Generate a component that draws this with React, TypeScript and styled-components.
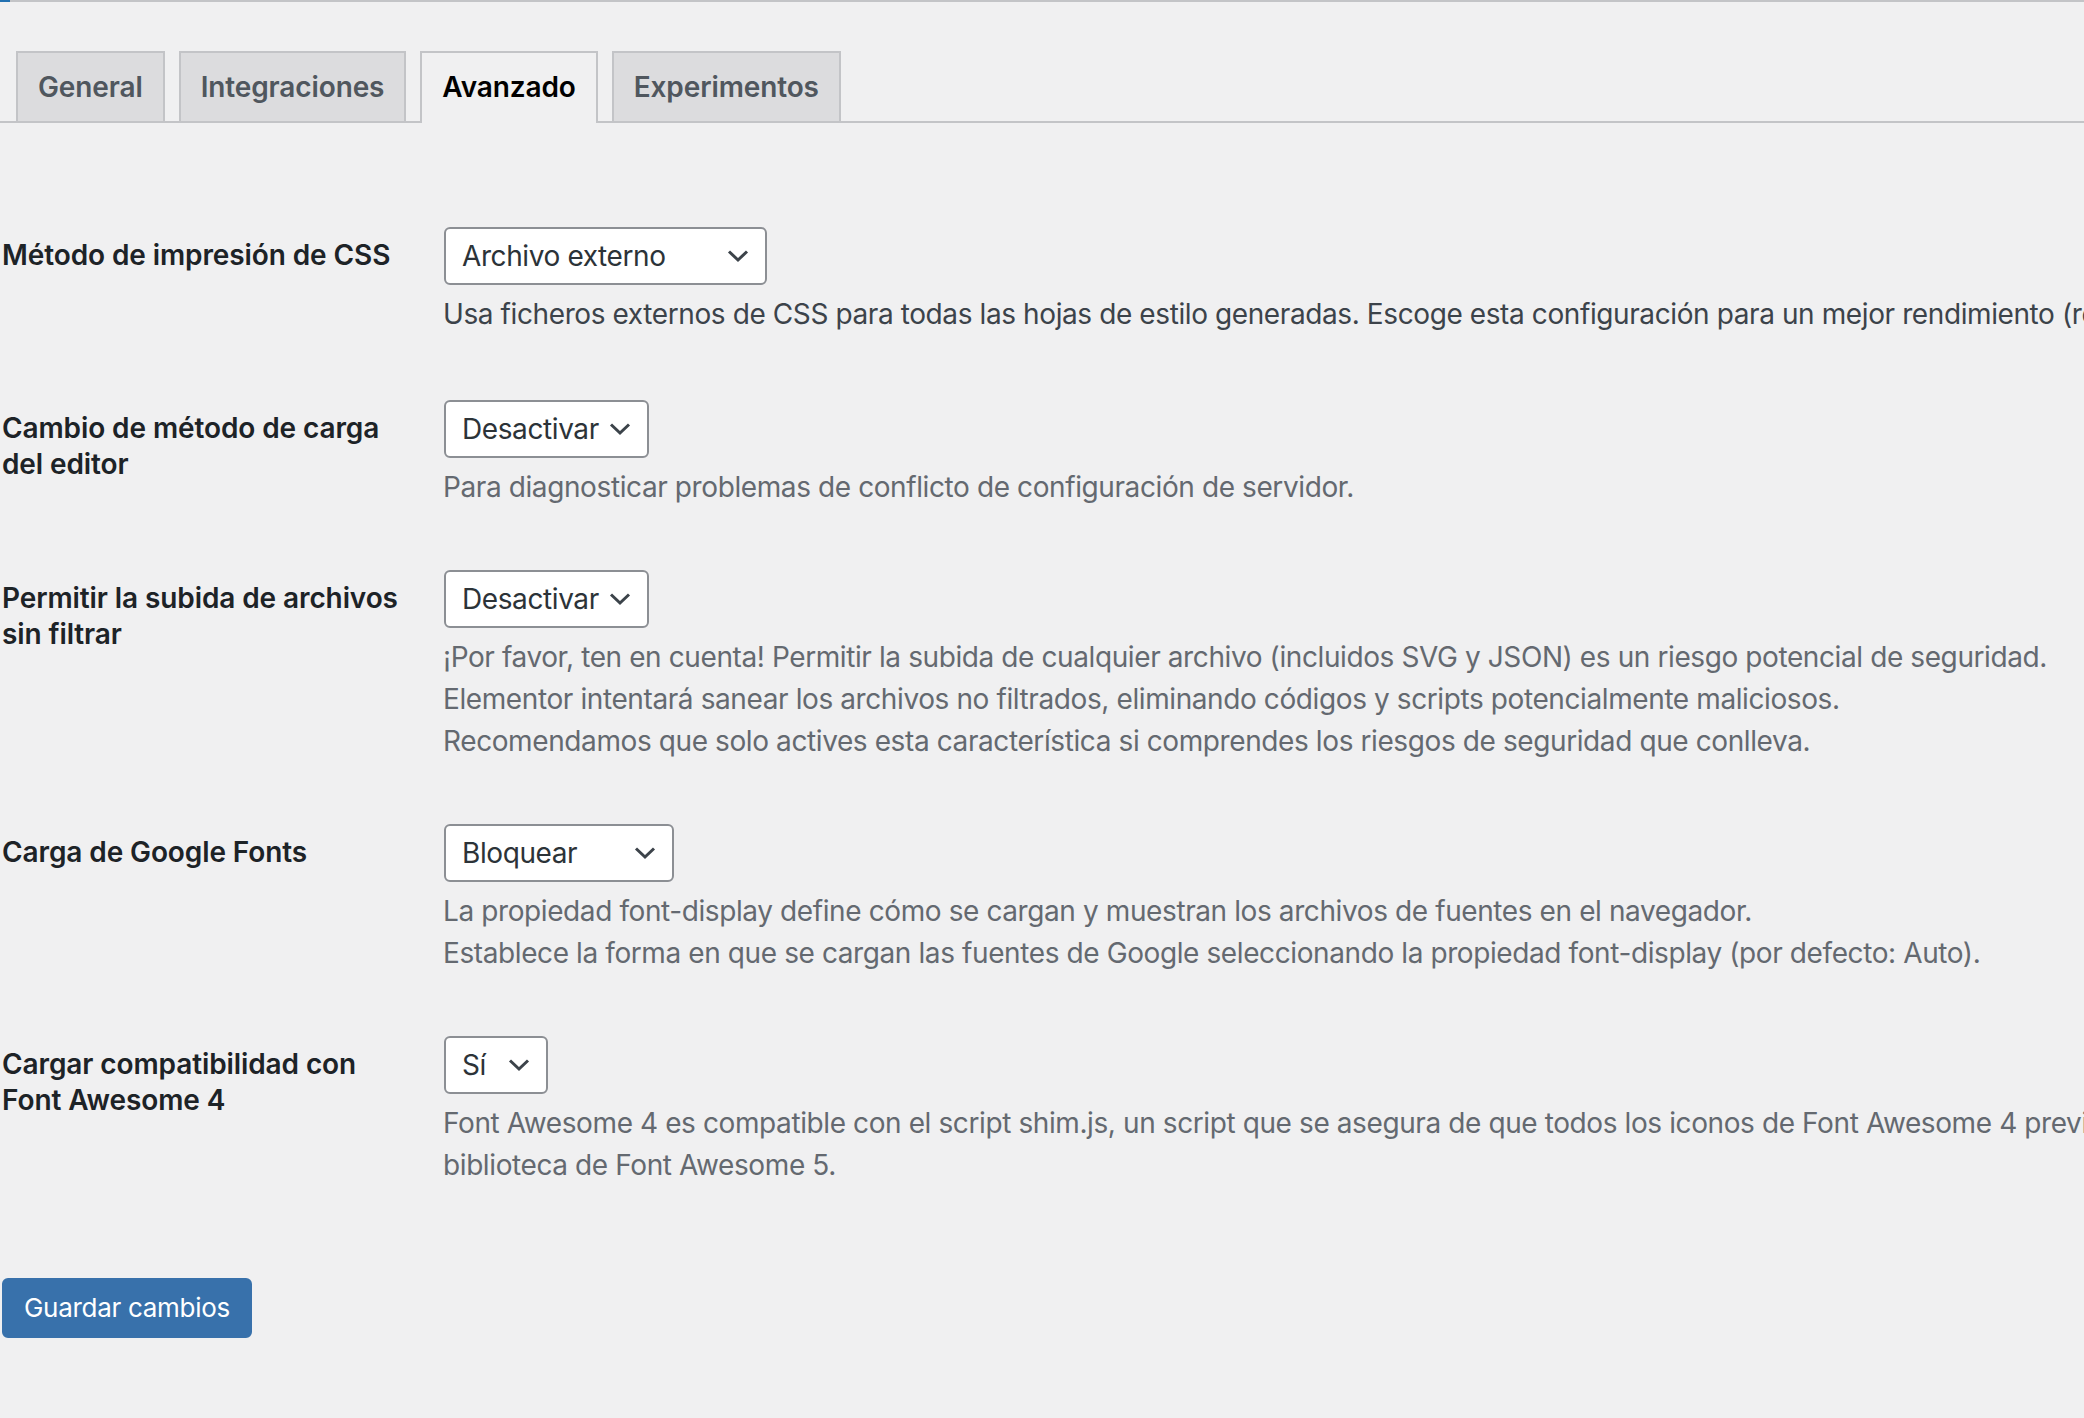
import React from "react";
import styled, { createGlobalStyle } from "styled-components";

const GlobalStyle = createGlobalStyle`
  html, body {
    margin: 0;
    padding: 0;
    background: #f0f0f1;
    overflow: hidden;
  }
  body {
    font-family: Inter, "Noto Sans", "Liberation Sans", sans-serif;
    color: #3c434a;
  }
`;

const Page = styled.div`
  min-height: 1418px;
  border-top: 2px solid #c3c4c7;
  position: relative;
  padding: 49px 0 0 2px;
  box-sizing: border-box;
`;

const Accent = styled.span`
  position: absolute;
  left: 0;
  top: -2px;
  width: 10px;
  height: 2px;
  background: #2271b1;
`;

const TabBar = styled.nav`
  display: flex;
  align-items: flex-end;
  margin-left: -2px;
  border-bottom: 2px solid #c3c4c7;
  padding-left: 2px;
`;

const Tab = styled.a<{ $active?: boolean }>`
  display: block;
  margin-left: 14px;
  margin-bottom: ${(p) => (p.$active ? "-2px" : "0")};
  padding: 10px 20px ${(p) => (p.$active ? "12px" : "10px")};
  border: 2px solid #c3c4c7;
  border-bottom: none;
  background: ${(p) => (p.$active ? "#f0f0f1" : "#dcdcde")};
  color: ${(p) => (p.$active ? "#000" : "#50575e")};
  font-size: 28px;
  line-height: 48px;
  font-weight: 600;
  letter-spacing: -0.12px;
  text-decoration: none;
  white-space: nowrap;
`;

const FormTable = styled.table`
  border-collapse: collapse;
  margin-top: 74px;
  width: 100%;
  table-layout: fixed;
`;

const Row = styled.tr``;

const Label = styled.th`
  width: 400px;
  padding: 40px 20px 40px 0;
  text-align: left;
  vertical-align: top;
  font-size: 28px;
  line-height: 36px;
  font-weight: 600;
  letter-spacing: -0.1px;
  color: #1d2327;
`;

const Field = styled.td`
  padding: 30px 20px 30px 22px;
  vertical-align: top;
  white-space: nowrap;
`;

const SelectBox = styled.div<{ $width: number }>`
  display: flex;
  align-items: center;
  justify-content: space-between;
  box-sizing: border-box;
  width: ${(p) => p.$width}px;
  height: 58px;
  padding: 0 16px 0 16px;
  background: #fff;
  border: 2px solid #8c8f94;
  border-radius: 6px;
  font-size: 28px;
  letter-spacing: -0.4px;
  color: #2c3338;
`;

const Chevron = styled.svg`
  width: 22px;
  height: 14px;
  flex: none;
`;

const Description = styled.p<{ $dark?: boolean }>`
  margin: 8px 0 ${(p) => (p.$dark ? "5px" : "2px")} -1px;
  font-size: 28px;
  line-height: 42px;
  letter-spacing: -0.4px;
  color: ${(p) => (p.$dark ? "#3c434a" : "#646970")};
`;

const Submit = styled.p`
  margin: 40px 0 0;
  padding: 20px 0;
`;

const PrimaryButton = styled.button`
  height: 60px;
  padding: 0 20px;
  background: #3871ab;
  border: 2px solid #3871ab;
  border-radius: 6px;
  color: #fff;
  font-family: Inter, "Noto Sans", "Liberation Sans", sans-serif;
  font-size: 26px;
  line-height: 56px;
  letter-spacing: -0.3px;
  cursor: pointer;
`;

function Select({ value, width }: { value: string; width: number }) {
  return (
    <SelectBox $width={width}>
      <span>{value}</span>
      <Chevron viewBox="0 0 22 14">
        <path d="M2 2.5 L11 11 L20 2.5" fill="none" stroke="#3c434a" strokeWidth="3" />
      </Chevron>
    </SelectBox>
  );
}

type Setting = {
  label: React.ReactNode;
  value: string;
  width: number;
  lines: string[];
  dark?: boolean;
};

const settings: Setting[] = [
  {
    label: "Método de impresión de CSS",
    value: "Archivo externo",
    width: 323,
    dark: true,
    lines: [
      "Usa ficheros externos de CSS para todas las hojas de estilo generadas. Escoge esta configuración para un mejor rendimiento (recomendado).",
    ],
  },
  {
    label: (
      <>
        Cambio de método de carga
        <br />
        del editor
      </>
    ),
    value: "Desactivar",
    width: 205,
    lines: ["Para diagnosticar problemas de conflicto de configuración de servidor."],
  },
  {
    label: (
      <>
        Permitir la subida de archivos
        <br />
        sin filtrar
      </>
    ),
    value: "Desactivar",
    width: 205,
    lines: [
      "¡Por favor, ten en cuenta! Permitir la subida de cualquier archivo (incluidos SVG y JSON) es un riesgo potencial de seguridad.",
      "Elementor intentará sanear los archivos no filtrados, eliminando códigos y scripts potencialmente maliciosos.",
      "Recomendamos que solo actives esta característica si comprendes los riesgos de seguridad que conlleva.",
    ],
  },
  {
    label: "Carga de Google Fonts",
    value: "Bloquear",
    width: 230,
    lines: [
      "La propiedad font-display define cómo se cargan y muestran los archivos de fuentes en el navegador.",
      "Establece la forma en que se cargan las fuentes de Google seleccionando la propiedad font-display (por defecto: Auto).",
    ],
  },
  {
    label: (
      <>
        Cargar compatibilidad con
        <br />
        Font Awesome 4
      </>
    ),
    value: "Sí",
    width: 104,
    lines: [
      "Font Awesome 4 es compatible con el script shim.js, un script que se asegura de que todos los iconos de Font Awesome 4 previamente seleccionados se muestran correctamente al usar la",
      "biblioteca de Font Awesome 5.",
    ],
  },
];

export default function App() {
  return (
    <>
      <GlobalStyle />
      <Page>
        <Accent />
        <TabBar>
          <Tab href="#">General</Tab>
          <Tab href="#">Integraciones</Tab>
          <Tab href="#" $active>
            Avanzado
          </Tab>
          <Tab href="#">Experimentos</Tab>
        </TabBar>
        <FormTable>
          <tbody>
            {settings.map((s, i) => (
              <Row key={i}>
                <Label>{s.label}</Label>
                <Field>
                  <Select value={s.value} width={s.width} />
                  <Description $dark={s.dark}>
                    {s.lines.map((l, j) => (
                      <React.Fragment key={j}>
                        {j > 0 && <br />}
                        {l}
                      </React.Fragment>
                    ))}
                  </Description>
                </Field>
              </Row>
            ))}
          </tbody>
        </FormTable>
        <Submit>
          <PrimaryButton type="button">Guardar cambios</PrimaryButton>
        </Submit>
      </Page>
    </>
  );
}
